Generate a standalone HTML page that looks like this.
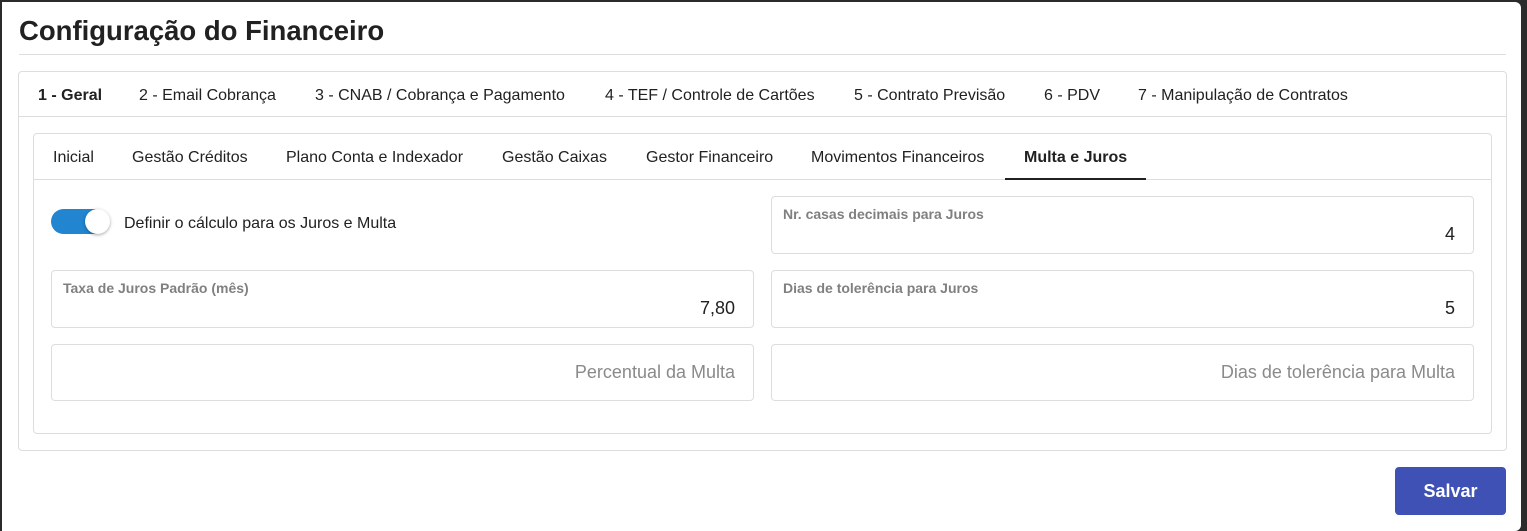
<!DOCTYPE html>
<html><head><meta charset="utf-8"><style>
*{box-sizing:border-box;margin:0;padding:0}
body{width:1527px;height:531px;background:#2b2b2b;font-family:"Liberation Sans",Arial,sans-serif;position:relative;overflow:hidden;color:#212121}
.page{position:absolute;left:2px;top:2px;width:1519px;height:529px;background:#fff;border-radius:0 6px 6px 0}
.abs{position:absolute}
h1{position:absolute;left:19px;top:15px;font-size:27.5px;font-weight:bold;color:#212121}
.hr{position:absolute;left:19px;top:54px;width:1487px;height:1px;background:#ddd}
.card{position:absolute;border:1px solid #ddd;border-radius:4px}
.t{position:absolute;font-size:16px;white-space:nowrap}
.f{position:absolute;border:1px solid #ddd;border-radius:4px;width:703px;height:58px}
.lab{position:absolute;left:11px;top:9px;font-size:14px;font-weight:bold;color:#808080}
.val{position:absolute;right:18px;top:27px;font-size:18px;color:#212121}
.ph{position:absolute;right:18px;top:17px;font-size:18px;color:#8a8a8a}
</style></head><body><div class="page"></div>
<h1>Configuração do Financeiro</h1>
<div class="hr"></div>
<div class="card" style="left:18px;top:71px;width:1489px;height:380px"></div>
<div class="abs" style="left:19px;top:116px;width:1487px;height:1px;background:#ddd"></div>
<div class="t" style="left:38px;top:87px;font-weight:bold">1 - Geral</div>
<div class="t" style="left:139px;top:87px">2 - Email Cobrança</div>
<div class="t" style="left:315px;top:87px">3 - CNAB / Cobrança e Pagamento</div>
<div class="t" style="left:605px;top:87px">4 - TEF / Controle de Cartões</div>
<div class="t" style="left:854px;top:87px">5 - Contrato Previsão</div>
<div class="t" style="left:1044px;top:87px">6 - PDV</div>
<div class="t" style="left:1138px;top:87px">7 - Manipulação de Contratos</div>
<div class="card" style="left:33px;top:133px;width:1459px;height:301px"></div>
<div class="abs" style="left:34px;top:179px;width:1457px;height:1px;background:#ddd"></div>
<div class="abs" style="left:1005px;top:178px;width:141px;height:2px;background:#212121"></div>
<div class="t" style="left:53px;top:149px">Inicial</div>
<div class="t" style="left:132px;top:149px">Gestão Créditos</div>
<div class="t" style="left:286px;top:149px">Plano Conta e Indexador</div>
<div class="t" style="left:502px;top:149px">Gestão Caixas</div>
<div class="t" style="left:646px;top:149px">Gestor Financeiro</div>
<div class="t" style="left:811px;top:149px">Movimentos Financeiros</div>
<div class="t" style="left:1024px;top:149px;font-weight:bold">Multa e Juros</div>
<div class="abs" style="left:51px;top:209px;width:58px;height:25px;border-radius:13px;background:#2185d0"></div>
<div class="abs" style="left:85px;top:209px;width:25px;height:25px;border-radius:50%;background:#fff;box-shadow:0 1px 3px rgba(0,0,0,.35)"></div>
<div class="t" style="left:124px;top:215px">Definir o cálculo para os Juros e Multa</div>
<div class="f" style="left:771px;top:196px"><div class="lab">Nr. casas decimais para Juros</div><div class="val">4</div></div>
<div class="f" style="left:51px;top:270px"><div class="lab">Taxa de Juros Padrão (mês)</div><div class="val">7,80</div></div>
<div class="f" style="left:771px;top:270px"><div class="lab">Dias de tolerência para Juros</div><div class="val">5</div></div>
<div class="f" style="left:51px;top:344px;height:57px"><div class="ph">Percentual da Multa</div></div>
<div class="f" style="left:771px;top:344px;height:57px"><div class="ph">Dias de tolerência para Multa</div></div>
<div class="abs" style="left:1395px;top:467px;width:111px;height:48px;background:#3f51b5;border-radius:4px;color:#fff;font-weight:bold;font-size:18px;text-align:center;line-height:48px">Salvar</div>
</body></html>
